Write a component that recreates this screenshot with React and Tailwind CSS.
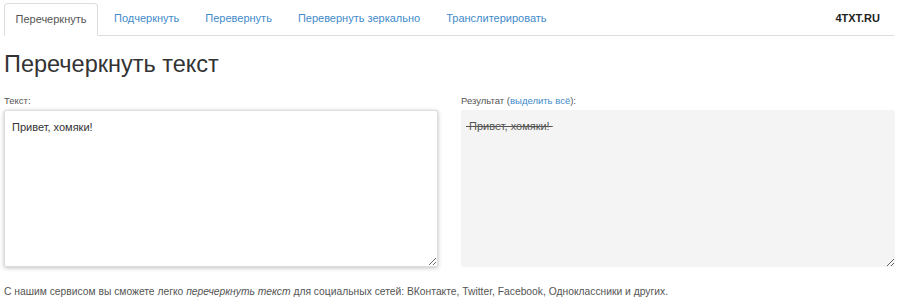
import React from 'react'

const tabs = ['Подчеркнуть', 'Перевернуть', 'Перевернуть зеркально', 'Транслитерировать']

export default function App() {
  return (
    <div className="w-[900px] h-[304px] bg-white text-[#333] overflow-hidden" style={{ fontFamily: '"Liberation Sans", Arial, sans-serif' }}>
      <div className="px-[4px]">
        <nav className="flex items-end h-[36px] pt-[3px] border-b border-[#ddd] mr-[2px]">
          <div className="h-[33px] w-[94px] flex items-center justify-center text-[11px] text-[#555] bg-white border border-[#ddd] border-b-white rounded-t-[4px] -mb-px">
            Перечеркнуть
          </div>
          <div className="w-[3px]" />
          {tabs.map((t) => (
            <div key={t} className="h-[33px] px-[13px] flex items-center text-[11px] text-[#428bca]">
              {t}
            </div>
          ))}
          <div className="ml-auto h-[33px] pr-[14px] flex items-center text-[11px] font-bold text-[#222]">4TXT.RU</div>
        </nav>
        <h1 className="text-[23.5px] leading-[28px] mt-[14px] text-[#333]">Перечеркнуть текст</h1>
        <div className="flex gap-[23px] mt-[17px]">
          <div className="w-[434px]">
            <div className="text-[9.5px] leading-[12px] text-[#555] mb-[3px]">Текст:</div>
            <textarea
              className="block w-full h-[157px] px-[7px] py-[8px] text-[11px] text-[#333] bg-white border border-[#ddd] rounded-[2px] shadow-[0_1px_4px_rgba(0,0,0,0.25)] outline-none"
              style={{ fontFamily: '"Liberation Sans", Arial, sans-serif' }}
              defaultValue="Привет, хомяки!"
            />
          </div>
          <div className="w-[434px]">
            <div className="text-[9.5px] leading-[12px] text-[#555] mb-[3px]">
              Результат (<span className="text-[#428bca]">выделить всё</span>):
            </div>
            <textarea
              className="block w-full h-[157px] px-[5px] py-[8px] text-[11px] text-[#555] bg-[#f4f4f4] rounded-[2px] outline-none line-through"
              style={{ fontFamily: '"Liberation Sans", Arial, sans-serif' }}
              readOnly
              defaultValue=" Привет, хомяки! "
            />
          </div>
        </div>
        <p className="text-[10.3px] text-[#555] mt-[17px]">
          С нашим сервисом вы сможете легко <i>перечеркнуть текст</i> для социальных сетей: ВКонтакте, Twitter, Facebook, Одноклассники и других.
        </p>
      </div>
    </div>
  )
}
